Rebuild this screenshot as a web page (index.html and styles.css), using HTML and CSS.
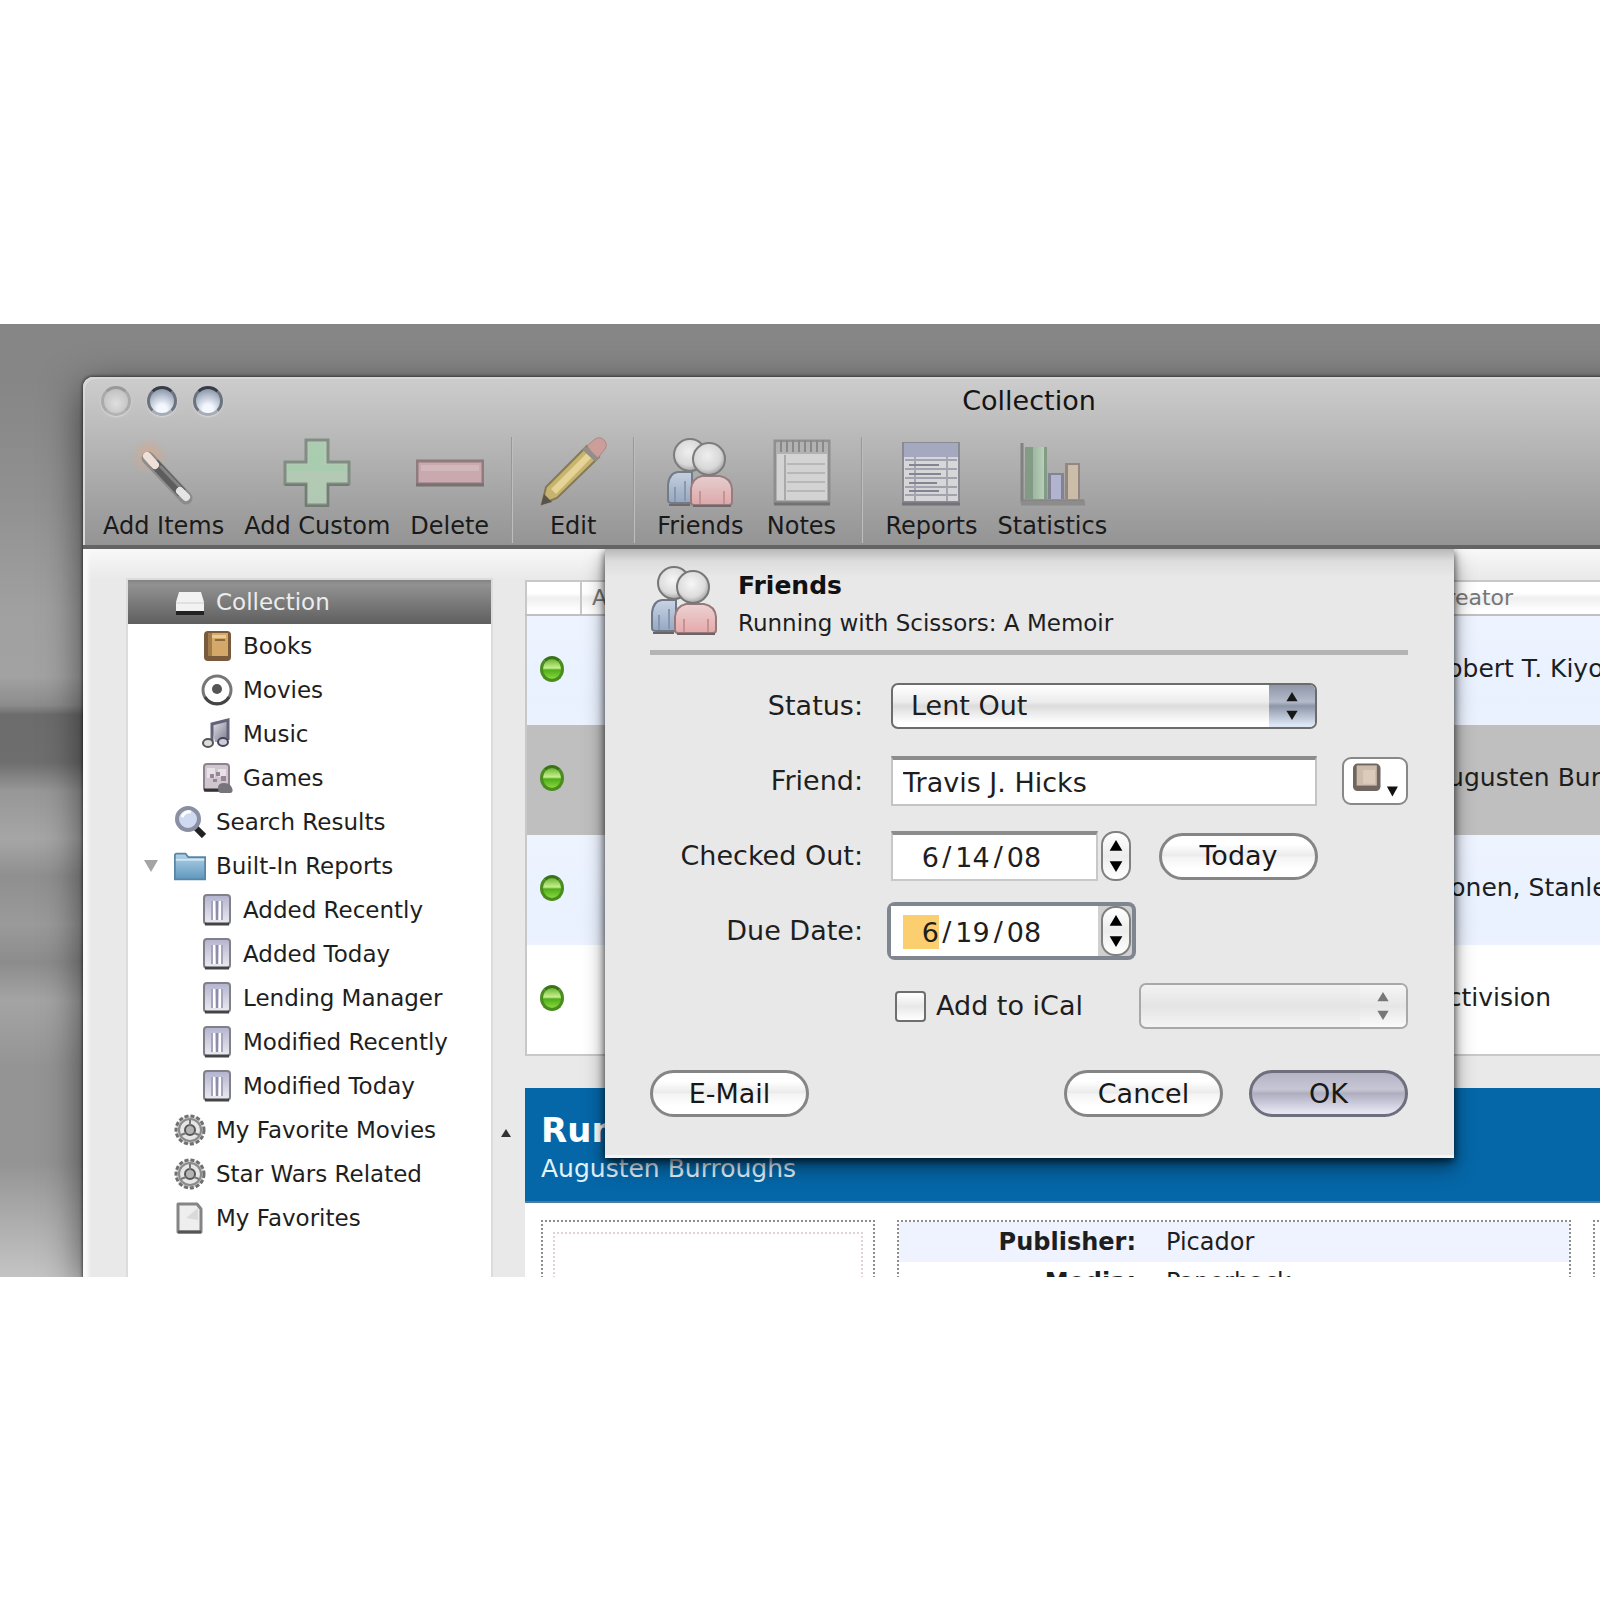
FILE: index.html
```html
<!DOCTYPE html>
<html lang="en">
<head>
<meta charset="utf-8">
<title>Collection</title>
<link rel="stylesheet" href="styles.css">
</head>
<body>
<svg class="sprite" aria-hidden="true">
  <defs>
    <linearGradient id="gBlue" x1="0" y1="0" x2="0" y2="1"><stop offset="0" stop-color="#c9d4e4"/><stop offset="1" stop-color="#94a8c4"/></linearGradient>
    <linearGradient id="gPink" x1="0" y1="0" x2="0" y2="1"><stop offset="0" stop-color="#ecd2d2"/><stop offset="1" stop-color="#e5a9ab"/></linearGradient>
    <radialGradient id="gHead" cx=".45" cy=".4" r=".6"><stop offset="0" stop-color="#f6f6f6"/><stop offset=".7" stop-color="#dcdcdc"/><stop offset="1" stop-color="#a4a4a4"/></radialGradient>
    <linearGradient id="gBar" x1="0" y1="0" x2="1" y2="0"><stop offset="0" stop-color="#9db8a0"/><stop offset="1" stop-color="#b9d2ba"/></linearGradient>
    <linearGradient id="gFolder" x1="0" y1="0" x2="0" y2="1"><stop offset="0" stop-color="#b4d3e8"/><stop offset="1" stop-color="#5f97be"/></linearGradient>
    <linearGradient id="gReport" x1="0" y1="0" x2="0" y2="1"><stop offset="0" stop-color="#b3b3cf"/><stop offset="1" stop-color="#ececf2"/></linearGradient>
    <linearGradient id="gNote" x1="0" y1="0" x2="1" y2="1"><stop offset="0" stop-color="#e2e2ee"/><stop offset="1" stop-color="#3c3c54"/></linearGradient>
    <radialGradient id="gSpark"><stop offset="0" stop-color="#e2a883" stop-opacity=".9"/><stop offset="1" stop-color="#cfa893" stop-opacity="0"/></radialGradient>
  </defs>
  <symbol id="i-friends" viewBox="0 0 68 70">
    <path d="M2 63V48q1-12 10-13h14v31H6q-4 0-4-3z" fill="url(#gBlue)" stroke="#6e7786" stroke-width="2"/>
    <path d="M9 50v15M19 44v20" stroke="#8796ad" stroke-width="2"/>
    <circle cx="24" cy="18" r="16" fill="url(#gHead)" stroke="#777" stroke-width="2"/>
    <path d="M25 65V52q1-11 11-13h18q11 2 12 13v13q0 3-3 3H28q-3 0-3-3z" fill="url(#gPink)" stroke="#95797b" stroke-width="2"/>
    <path d="M34 54v13M58 54v13" stroke="#c79294" stroke-width="2"/>
    <circle cx="43" cy="22" r="16" fill="url(#gHead)" stroke="#777" stroke-width="2"/>
    <path d="M3 68h21M27 69h38" stroke="#6a6468" stroke-width="2"/>
  </symbol>
  <symbol id="i-wand" viewBox="0 0 68 70">
    <circle cx="19" cy="19" r="19" fill="url(#gSpark)"/>
    <path d="M18 21L56 61" stroke="#8a8a8a" stroke-width="13" stroke-linecap="round"/>
    <path d="M24 26L52 56" stroke="#555" stroke-width="10"/>
    <path d="M30 29L50 50" stroke="#808080" stroke-width="3"/>
    <path d="M17 19L25 28" stroke="#f5e6dc" stroke-width="8" stroke-linecap="round"/>
    <path d="M50 54L56 60" stroke="#ececec" stroke-width="8" stroke-linecap="round"/>
  </symbol>
  <symbol id="i-plus" viewBox="0 0 68 70">
    <path d="M23 3h22v22h21v22H45v21H23V47H2V25h21z" fill="#b4cdb6" stroke="#7d8a7e" stroke-width="3"/>
    <path d="M26 6h15v22h21v6H5v-6h21z" fill="#a8d0ae"/>
    <path d="M2 48h21v21h22V48h21" fill="none" stroke="#6f7970" stroke-width="2"/>
  </symbol>
  <symbol id="i-minus" viewBox="0 0 68 70">
    <path d="M1 24h66v23H1z" fill="#cda9ae" stroke="#8b777a" stroke-width="3"/>
    <path d="M5 28h58v6H5z" fill="#d6b9bd"/>
    <path d="M0 48h68" stroke="#746b6c" stroke-width="3"/>
  </symbol>
  <symbol id="i-pencil" viewBox="0 0 68 70">
    <path d="M3 67L7 50 48 9l12 11L18 61z" fill="#c9b56a" stroke="#82744a" stroke-width="2"/>
    <path d="M12 52L51 13l5 4L17 57z" fill="#ecd994"/>
    <path d="M48 9L56 2q5-3 9 1t1 9l-8 10z" fill="#cf9c98" stroke="#a98380"/>
    <path d="M45 11l13 12" stroke="#8f8a84" stroke-width="5"/>
    <path d="M2 68l3-11 8 8z" fill="#514c42"/>
  </symbol>
  <symbol id="i-notes" viewBox="0 0 68 70">
    <path d="M8 4h54v61H8z" fill="#d8d8d8" stroke="#8c8c8c" stroke-width="3"/>
    <path d="M10 5h50v12H10z" fill="#b2b2b2"/>
    <path d="M14 3v12M20 3v12M26 3v12M32 3v12M38 3v12M44 3v12M50 3v12M56 3v12" stroke="#858585" stroke-width="2"/>
    <path d="M18 18v46" stroke="#aaa" stroke-width="2"/>
    <path d="M20 27h38M20 36h38M20 45h38M20 54h38" stroke="#b9b9b9" stroke-width="2"/>
    <path d="M7 67h56" stroke="#6e6e6e" stroke-width="3"/>
  </symbol>
  <symbol id="i-reports" viewBox="0 0 68 70">
    <path d="M6 6h56v59H6z" fill="#dcdcde" stroke="#868690" stroke-width="2"/>
    <path d="M7 6h54v14H7z" fill="#a4a8c2"/>
    <path d="M8 23h52M8 32h52M8 41h52M8 50h52M8 58h52" stroke="#a2a2ae" stroke-width="2"/>
    <path d="M18 19v45M50 19v45" stroke="#a6a6b4" stroke-width="2"/>
    <path d="M12 28h30M12 37h32M12 46h28M12 54h30" stroke="#808090" stroke-width="2"/>
    <path d="M5 67h58" stroke="#6e6e74" stroke-width="3"/>
  </symbol>
  <symbol id="i-stats" viewBox="0 0 68 70">
    <path d="M4 6v58h62" fill="none" stroke="#7d7d7d" stroke-width="3"/>
    <path d="M7 10h22v52H7z" fill="#7f9a82"/><path d="M15 10h11v52H15z" fill="url(#gBar)"/>
    <path d="M30 36h16v26H30z" fill="#7f7f92"/><path d="M33 38h10v24H33z" fill="#b4b6d4"/>
    <path d="M47 26h15v36H47z" fill="#94827c"/><path d="M50 28h10v34H50z" fill="#cfc0a8"/>
    <path d="M3 66h64" stroke="#8a8a8a" stroke-width="5"/>
  </symbol>
  <symbol id="i-disk" viewBox="0 0 32 32">
    <path d="M2 23v6h28v-6z" fill="#222"/>
    <path d="M5 6h22l3 10v9H2v-9z" fill="#f2f2f2"/><path d="M2 17h28" stroke="#cfcfcf"/>
  </symbol>
  <symbol id="i-book" viewBox="0 0 32 32">
    <rect x="3" y="1" width="27" height="30" rx="4" fill="#7a5a3c"/>
    <path d="M7 3h20v23H7z" fill="#d3a869"/><path d="M7 3h4v23H7z" fill="#a27c4b"/>
    <path d="M14 10h10" stroke="#8d6a3e" stroke-width="2"/><path d="M11 5h14v3H11z" fill="#e8cb96"/>
  </symbol>
  <symbol id="i-movie" viewBox="0 0 32 32">
    <circle cx="16" cy="16" r="14" fill="#fff" stroke="#777" stroke-width="3"/>
    <path d="M4 23a14 14 0 0 0 24 0" fill="none" stroke="#444" stroke-width="3"/>
    <circle cx="16" cy="15" r="5" fill="#555"/>
  </symbol>
  <symbol id="i-music" viewBox="0 0 32 32">
    <path d="M10 6L27 2v22H14z" fill="url(#gNote)" opacity=".7"/>
    <path d="M11 24V6l16-4v20" fill="none" stroke="#62627a" stroke-width="3"/>
    <ellipse cx="7" cy="25" rx="5" ry="4" fill="#ddd" stroke="#555" stroke-width="2"/>
    <ellipse cx="22" cy="24" rx="5" ry="4" fill="#ccd" stroke="#445" stroke-width="2"/>
  </symbol>
  <symbol id="i-game" viewBox="0 0 32 32">
    <rect x="3" y="2" width="25" height="27" rx="3" fill="#cfc6cf" stroke="#8e838d" stroke-width="2"/>
    <path d="M6 6h8v10H6zM17 7h8v8h-8z" fill="#e9e1e8"/><path d="M9 12h4v4H9zM15 10h4v4h-4zM12 17h4v3h-4zM20 14h5v5h-5z" fill="#9a8499"/>
    <path d="M3 28h20" stroke="#333" stroke-width="3"/>
    <path d="M17 26q0-5 6-5t8 5-3 5h-8q-3 0-3-5z" fill="#77747c"/>
  </symbol>
  <symbol id="i-search" viewBox="0 0 32 32">
    <path d="M21 21l9 9" stroke="#222" stroke-width="6"/>
    <circle cx="14" cy="13" r="11" fill="#cfdaf0" stroke="#8a90a2" stroke-width="4"/>
    <path d="M8 11q3-6 9-5" fill="none" stroke="#fff" stroke-width="3"/>
  </symbol>
  <symbol id="i-folder" viewBox="0 0 36 32">
    <path d="M1 31V4q0-2 2-2h10l3 4h19v25z" fill="url(#gFolder)" stroke="#5a86a6" stroke-width="2"/>
    <path d="M2 9h32" stroke="#d5e7f2" stroke-width="2"/>
  </symbol>
  <symbol id="i-report" viewBox="0 0 32 32">
    <rect x="3" y="1" width="26" height="29" rx="3" fill="url(#gReport)" stroke="#808088" stroke-width="2"/>
    <path d="M11 7v19M21 7v19" stroke="#a4a4bc" stroke-width="2"/><path d="M16 7v19" stroke="#8d8da8" stroke-width="2"/><path d="M13 7v19M19 7v19" stroke="#fff" stroke-width="2"/>
    <path d="M4 30h24" stroke="#444" stroke-width="3"/>
  </symbol>
  <symbol id="i-gear" viewBox="0 0 32 32">
    <circle cx="16" cy="16" r="14" fill="#d4d4d4" stroke="#707070" stroke-width="3" stroke-dasharray="4 2"/>
    <circle cx="16" cy="16" r="11" fill="#e6e6e6" stroke="#8a8a8a" stroke-width="2"/>
    <circle cx="16" cy="16" r="5" fill="#b4b4b4" stroke="#555" stroke-width="2"/>
    <path d="M16 6v6M7 21l5-2M25 21l-5-2" stroke="#777" stroke-width="2"/>
  </symbol>
  <symbol id="i-page" viewBox="0 0 32 32">
    <path d="M4 2h19l4 5v23H4z" fill="#eee" stroke="#858585" stroke-width="3" stroke-linejoin="round"/>
    <path d="M12 16L24 6v12z" fill="#dadada"/><path d="M4 30h23" stroke="#555" stroke-width="3"/>
  </symbol>
  <symbol id="i-updown" viewBox="0 0 16 32">
    <path d="M8 1l6 10H2z M8 31l6-10H2z"/>
  </symbol>
</svg>

<main class="desktop">
  <div class="window">
    <header class="chrome">
      <div class="titlebar">
        <div class="lights">
          <button class="light off" aria-label="Close"></button>
          <button class="light" aria-label="Minimize"></button>
          <button class="light" aria-label="Zoom"></button>
        </div>
        <h1>Collection</h1>
      </div>
      <nav class="toolbar" aria-label="Toolbar">
        <button class="tool"><svg><use href="#i-wand"/></svg>Add Items</button>
        <button class="tool"><svg><use href="#i-plus"/></svg>Add Custom</button>
        <button class="tool"><svg><use href="#i-minus"/></svg>Delete</button>
        <span class="divider"></span>
        <button class="tool"><svg><use href="#i-pencil"/></svg>Edit</button>
        <span class="divider"></span>
        <button class="tool"><svg><use href="#i-friends"/></svg>Friends</button>
        <button class="tool"><svg><use href="#i-notes"/></svg>Notes</button>
        <span class="divider"></span>
        <button class="tool"><svg><use href="#i-reports"/></svg>Reports</button>
        <button class="tool"><svg><use href="#i-stats"/></svg>Statistics</button>
      </nav>
    </header>

    <div class="content">
      <aside class="sidebar">
        <ul class="tree">
          <li><a class="selected" href="#collection"><svg><use href="#i-disk"/></svg>Collection</a></li>
          <li><a class="child" href="#books"><svg><use href="#i-book"/></svg>Books</a></li>
          <li><a class="child" href="#movies"><svg><use href="#i-movie"/></svg>Movies</a></li>
          <li><a class="child" href="#music"><svg><use href="#i-music"/></svg>Music</a></li>
          <li><a class="child" href="#games"><svg><use href="#i-game"/></svg>Games</a></li>
          <li><a href="#search"><svg><use href="#i-search"/></svg>Search Results</a></li>
          <li><a class="open" href="#reports"><svg><use href="#i-folder"/></svg>Built-In Reports</a></li>
          <li><a class="child" href="#added-recently"><svg><use href="#i-report"/></svg>Added Recently</a></li>
          <li><a class="child" href="#added-today"><svg><use href="#i-report"/></svg>Added Today</a></li>
          <li><a class="child" href="#lending"><svg><use href="#i-report"/></svg>Lending Manager</a></li>
          <li><a class="child" href="#modified-recently"><svg><use href="#i-report"/></svg>Modified Recently</a></li>
          <li><a class="child" href="#modified-today"><svg><use href="#i-report"/></svg>Modified Today</a></li>
          <li><a href="#favorite-movies"><svg><use href="#i-gear"/></svg>My Favorite Movies</a></li>
          <li><a href="#star-wars"><svg><use href="#i-gear"/></svg>Star Wars Related</a></li>
          <li><a href="#favorites"><svg><use href="#i-page"/></svg>My Favorites</a></li>
        </ul>
      </aside>
      <div class="splitter"><svg viewBox="0 0 10 8"><path d="M5 0l5 8H0z"/></svg></div>

      <section class="main">
        <table class="items">
          <thead><tr><th class="c-status"></th><th class="c-title">All Titles</th><th>Creator</th></tr></thead>
          <tbody>
            <tr class="tint"><td><i class="dot"></i></td><td></td><td>Robert T. Kiyosaki</td></tr>
            <tr class="current"><td><i class="dot"></i></td><td></td><td>Augusten Burroughs</td></tr>
            <tr class="tint"><td><i class="dot"></i></td><td></td><td>Donen, Stanley</td></tr>
            <tr><td><i class="dot"></i></td><td></td><td>Activision</td></tr>
          </tbody>
        </table>
        <div class="banner">
          <h2>Running with Scissors</h2>
          <p>Augusten Burroughs</p>
        </div>
        <div class="details">
          <div class="card cover"><div class="cover-inner"></div></div>
          <dl class="card facts">
            <div class="tint"><dt>Publisher:</dt><dd>Picador</dd></div>
            <div><dt>Media:</dt><dd>Paperback</dd></div>
          </dl>
          <div class="card extra"></div>
        </div>
      </section>

      <form class="sheet" aria-label="Friends">
        <div class="sheet-head">
          <svg><use href="#i-friends"/></svg>
          <div>
            <h2>Friends</h2>
            <p>Running with Scissors: A Memoir</p>
          </div>
        </div>
        <div class="grid">
          <label for="status">Status:</label>
          <div class="field">
            <div class="popup"><select id="status"><option>Lent Out</option></select><span class="cap"><svg><use href="#i-updown"/></svg></span></div>
          </div>
          <label for="friend">Friend:</label>
          <div class="field">
            <input id="friend" class="text" type="text" value="Travis J. Hicks">
            <button type="button" class="picker" aria-label="Choose friend"><svg viewBox="0 0 66 48"><rect x="9" y="5" width="30" height="30" rx="5" fill="#6f6660"/><rect x="13" y="7" width="22" height="22" fill="#cdbbab"/><path d="M20 12h13v15H20z" fill="#dccabb"/><path d="M46 30h12l-6 11z" fill="#111"/></svg></button>
          </div>
          <label for="out-month">Checked Out:</label>
          <div class="field">
            <div class="date">
              <div class="segments"><input id="out-month" class="m" value="6"><span>/</span><input value="14" aria-label="Day"><span>/</span><input value="08" aria-label="Year"></div>
              <button type="button" class="stepper" aria-label="Change date"><svg><use href="#i-updown"/></svg></button>
            </div>
            <button type="button" class="pill today">Today</button>
          </div>
          <label for="due-month">Due Date:</label>
          <div class="field">
            <div class="date focused">
              <div class="segments"><input id="due-month" class="m" value="6"><span>/</span><input value="19" aria-label="Day"><span>/</span><input value="08" aria-label="Year"></div>
              <button type="button" class="stepper" aria-label="Change date"><svg><use href="#i-updown"/></svg></button>
            </div>
          </div>
          <div class="field ical">
            <input id="ical" type="checkbox"><label for="ical">Add to iCal</label>
            <div class="popup disabled"><select aria-label="Calendar" disabled></select><span class="cap"><svg><use href="#i-updown"/></svg></span></div>
          </div>
        </div>
        <div class="actions">
          <button type="button" class="pill">E-Mail</button>
          <button type="button" class="pill push">Cancel</button>
          <button type="button" class="pill default">OK</button>
        </div>
      </form>
    </div>
  </div>
</main>
</body>
</html>
```
FILE: styles.css
```css
* { box-sizing: border-box; margin: 0; padding: 0; }

body {
  height: 100vh;
  padding: 324px 0 323px;
  background: #fff;
  color: #1e1e1e;
  font-family: "DejaVu Sans", "Open Sans", sans-serif;
  font-size: 27px;
  line-height: 32px;
}

button, input, select { font: inherit; color: inherit; }
button { border: 0; background: none; }
a { color: inherit; text-decoration: none; }
.sprite { position: absolute; width: 0; height: 0; }

.desktop {
  height: 100%;
  padding: 53px 0 0 83px;
  overflow: hidden;
  background: linear-gradient(180deg, #868686 0, #868686 6%, #909090 18%, #a0a0a0 30%, #a2a2a2 37%, #8c8c8c 40%, #6c6c6c 41%, #6e6e6e 46%, #979797 49%, #a6a6a6 54%, #8f8f8f 58%, #9a9a9a 63%, #8c8c8c 67%, #a4a4a4 71%, #949494 78%, #949494 88%, #b4b4b4 96%, #c4c4c4 100%);
}

.window {
  display: flex;
  flex-direction: column;
  width: calc(100% + 375px);
  height: 100%;
  border-radius: 10px 10px 0 0;
  background: #e9e9e9;
  box-shadow: 0 0 3px 1px rgba(0, 0, 0, .5), 0 12px 40px rgba(0, 0, 0, .6);
}

.chrome {
  height: 172px;
  border-bottom: 4px solid #646464;
  border-radius: 10px 10px 0 0;
  background: linear-gradient(#cdcdcd, #bcbcbc 30%, #949494);
  box-shadow: inset 2px 2px 0 #d8d8d8;
}

.titlebar { display: grid; grid-template-columns: 1fr auto 1fr; align-items: center; height: 48px; padding: 0 18px; }
.titlebar h1 { font-size: 27px; font-weight: 400; color: #141414; }
.lights { display: flex; gap: 16px; }
.light { width: 30px; height: 30px; border: 3px solid; border-color: #363c48 #6c727e #a6acb6; border-radius: 50%; background: radial-gradient(circle at 50% 85%, #f4f8fe 20%, #b4bece 60%, #78808f); box-shadow: 0 1px 2px #ddd; }
.light.off { border-color: #999 #aaa #b4b4b4; background: radial-gradient(circle at 50% 60%, #dedede, #b9b9b9); }

.toolbar { display: flex; gap: 20px; padding: 12px 20px 0; }
.tool { display: flex; flex-direction: column; align-items: center; gap: 4px; min-width: 76px; font-size: 24px; line-height: 30px; color: #1a1a1a; white-space: nowrap; }
.tool svg { width: 68px; height: 70px; opacity: .9; }
.divider { width: 2px; height: 106px; margin: 0 2px; background: linear-gradient(90deg, #989898 50%, #bebebe 50%); }

.content { position: relative; flex: 1; display: flex; min-height: 0; background: linear-gradient(90deg, #fafafa 3px, transparent 8px), linear-gradient(#f8f8f8, #e9e9e9 30px); }

.sidebar { width: 408px; padding: 31px 0 0 45px; }
.tree { height: 100%; list-style: none; background: #fff; box-shadow: 0 0 0 2px #dcdcdc; overflow: hidden; }
.tree a { display: flex; align-items: center; gap: 10px; height: 44px; padding-left: 46px; font-size: 23px; white-space: nowrap; }
.tree svg { width: 32px; height: 32px; }
.tree .child { padding-left: 73px; }
.tree .selected { color: #ececec; background: linear-gradient(#838383, #929292 10%, #5f5f5f); }
.tree .open { padding-left: 16px; }
.tree .open::before { content: ""; width: 14px; height: 12px; margin-right: 6px; background: #a4a4a4; clip-path: polygon(0 0, 100% 0, 50% 100%); }

.splitter { display: flex; width: 34px; padding: 580px 0 0 10px; }
.splitter svg { width: 10px; height: 8px; fill: #333; }

.main { flex: 1; min-width: 0; padding-top: 31px; overflow: hidden; }
.items { width: 100%; border-collapse: collapse; table-layout: fixed; background: #fff; border: 2px solid #c8c8c8; font-size: 25px; text-align: left; white-space: nowrap; }
.items th { height: 34px; border-bottom: 2px solid #c0c0c0; background: linear-gradient(#fff 35%, #efefef 50%, #fff 90%); font-size: 22px; font-weight: 400; line-height: 28px; color: #777; }
.items .c-status { width: 55px; border-right: 2px solid #c8c8c8; }
.items .c-title { width: 850px; padding-left: 10px; }
.items td { height: 110px; padding-bottom: 4px; }
.items td:first-child { padding-left: 13px; }
.items .tint { background: linear-gradient(#eef4ff, #e9f1ff 80%, #ecf2fe); }
.items .current { background: #bfbfbf; }
.dot { display: block; width: 24px; height: 26px; border: 3px solid #4a8c1e; border-top-color: #3a7216; border-radius: 50%; background: linear-gradient(#6ab336, #c8f08c 45%, #4fae1a 55%, #8ad83c); }

.banner { height: 115px; margin-top: 32px; padding: 22px 16px; border-bottom: 2px solid #4c7da0; background: #0567a8; color: #fff; }
.banner h2 { font-size: 34px; font-weight: 700; line-height: 40px; }
.banner p { font-size: 25px; line-height: 38px; color: #e4f2fc; }

.details { display: flex; gap: 22px; height: 200px; padding: 17px 16px; background: #fff; }
.card { border: 2px dotted #8c8c8c; }
.cover { width: 334px; padding: 10px; }
.cover-inner { height: 100%; border: 2px dotted #e0d4d4; }
.facts { width: 674px; font-size: 24px; }
.facts div { display: flex; gap: 30px; height: 40px; align-items: center; }
.facts .tint { background: #eff2ff; }
.facts dt { width: 237px; font-weight: 700; text-align: right; }
.extra { flex: 1; }

.sheet {
  position: absolute;
  top: 0;
  left: 50%;
  width: 849px;
  margin-left: -424px;
  padding: 16px 46px 41px 45px;
  background: linear-gradient(#b8b8b8, #dcdcdc 12px, #e8e8e8 28px);
  box-shadow: inset 0 -3px 0 #f4f4f4, 0 3px 8px rgba(0, 0, 0, .7), 0 10px 20px rgba(0, 0, 0, .4);
  clip-path: inset(0 -40px -40px -40px);
}
.sheet-head { display: flex; gap: 20px; height: 90px; border-bottom: 5px solid #b4b4b4; }
.sheet-head svg { width: 68px; height: 70px; }
.sheet-head h2 { font-size: 25px; font-weight: 700; line-height: 42px; color: #111; }
.sheet-head p { font-size: 23px; line-height: 32px; }

.grid { display: grid; grid-template-columns: 213px minmax(0, 1fr); grid-auto-rows: 50px; gap: 25px 28px; align-items: center; margin-top: 26px; }
.grid > label { text-align: right; }
.field { display: flex; align-items: center; height: 50px; }

.popup { display: flex; width: 426px; height: 46px; border: 2px solid #6c6c6c; border-radius: 7px; overflow: hidden; background: linear-gradient(#fff, #ececec 40%, #dcdcdc 50%, #fff 90%); }
.popup select { flex: 1; min-width: 0; padding-left: 18px; border: 0; background: none; appearance: none; }
.popup .cap { display: grid; place-items: center; width: 46px; background: linear-gradient(#8e96a8, #b4bccb 40%, #8c96a8 50%, #dce6f4 95%); }
.popup svg { width: 16px; height: 30px; fill: #181818; }
.popup.disabled { flex: 1; border-color: #a8a8a8; background: linear-gradient(#f2f2f2, #e4e4e4 50%, #f4f4f4); }
.popup.disabled .cap { background: linear-gradient(#f6f6f6, #e6e6e6 50%, #fafafa); }
.popup.disabled svg { fill: #777; }

.text { width: 426px; height: 50px; padding-left: 10px; border: 2px solid #c4c4c4; border-top: 4px solid #8c8c8c; background: #fff; }
.picker { width: 66px; height: 48px; margin-left: auto; border: 2px solid #888; border-radius: 9px; background: #fff; }
.picker svg { display: block; width: 62px; height: 44px; }

.date { display: flex; align-items: center; gap: 3px; width: 241px; height: 50px; }
.segments { display: flex; align-items: center; justify-content: space-between; width: 207px; height: 50px; padding: 0 54px 0 10px; border: 2px solid #c8c8c8; border-top: 4px solid #8c8c8c; background: #fff; }
.segments input { width: 36px; height: 34px; border: 0; background: none; text-align: center; }
.segments .m { text-align: right; }
.focused .m { background: #fbce70; }
.date.focused .segments { border-color: #fff; }
.date.focused { box-shadow: 0 0 0 4px #7f868f; border-radius: 4px; background: #d0d0d0; }
.stepper { display: grid; place-items: center; width: 30px; height: 50px; border: 2px solid #808080; border-radius: 14px; background: linear-gradient(#fff, #ececec 50%, #fff); }
.stepper svg { width: 18px; height: 34px; }

.pill { width: 159px; height: 47px; border: 3px solid #858585; border-radius: 24px; background: linear-gradient(#fff 20%, #ebebeb 48%, #f4f4f4 52%, #fff 80%); color: #181818; }
.today { margin-left: 27px; }
.pill.default { border-color: #6e6e7c; background: linear-gradient(#b4b4c6, #c6c6d4 40%, #aeaec0 50%, #e4e4f2 95%); }

.ical { grid-column: 2; }
.ical input { width: 31px; height: 31px; margin: 0 10px 0 4px; border: 2px solid #6e6e6e; border-radius: 4px; appearance: none; background: linear-gradient(#fff, #e8e8e8 50%, #fff); }
.ical label { width: 203px; }

.actions { display: flex; gap: 26px; margin-top: 39px; }
.push { margin-left: auto; }
```
